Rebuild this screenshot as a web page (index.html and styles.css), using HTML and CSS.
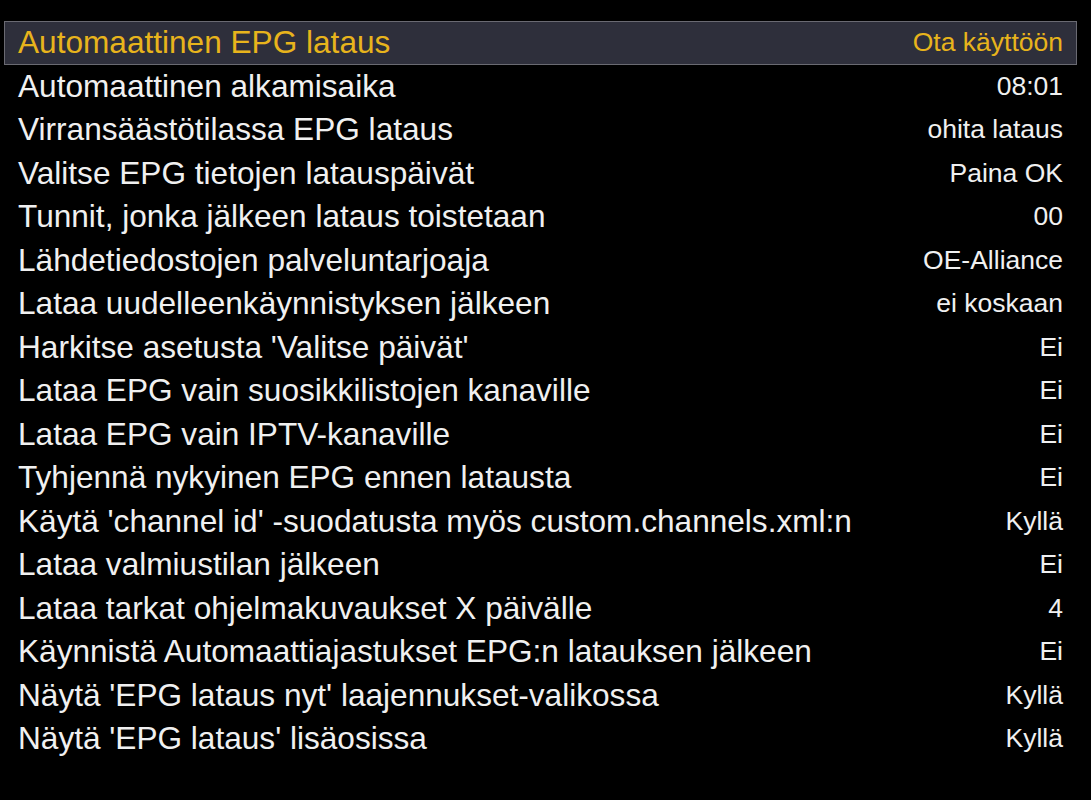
FILE: index.html
```html
<!DOCTYPE html>
<html lang="fi">
<head>
<meta charset="utf-8">
<link rel="stylesheet" href="styles.css">
</head>
<body>
<div class="list">
  <div class="row selected"><span class="label">Automaattinen EPG lataus</span><span class="value">Ota käyttöön</span></div>
  <div class="row"><span class="label">Automaattinen alkamisaika</span><span class="value">08:01</span></div>
  <div class="row"><span class="label">Virransäästötilassa EPG lataus</span><span class="value">ohita lataus</span></div>
  <div class="row"><span class="label">Valitse EPG tietojen latauspäivät</span><span class="value">Paina OK</span></div>
  <div class="row"><span class="label">Tunnit, jonka jälkeen lataus toistetaan</span><span class="value">00</span></div>
  <div class="row"><span class="label">Lähdetiedostojen palveluntarjoaja</span><span class="value">OE-Alliance</span></div>
  <div class="row"><span class="label">Lataa uudelleenkäynnistyksen jälkeen</span><span class="value">ei koskaan</span></div>
  <div class="row"><span class="label">Harkitse asetusta 'Valitse päivät'</span><span class="value">Ei</span></div>
  <div class="row"><span class="label">Lataa EPG vain suosikkilistojen kanaville</span><span class="value">Ei</span></div>
  <div class="row"><span class="label">Lataa EPG vain IPTV-kanaville</span><span class="value">Ei</span></div>
  <div class="row"><span class="label">Tyhjennä nykyinen EPG ennen latausta</span><span class="value">Ei</span></div>
  <div class="row"><span class="label">Käytä 'channel id' -suodatusta myös custom.channels.xml:n</span><span class="value">Kyllä</span></div>
  <div class="row"><span class="label">Lataa valmiustilan jälkeen</span><span class="value">Ei</span></div>
  <div class="row"><span class="label">Lataa tarkat ohjelmakuvaukset X päivälle</span><span class="value">4</span></div>
  <div class="row"><span class="label">Käynnistä Automaattiajastukset EPG:n latauksen jälkeen</span><span class="value">Ei</span></div>
  <div class="row"><span class="label">Näytä 'EPG lataus nyt' laajennukset-valikossa</span><span class="value">Kyllä</span></div>
  <div class="row"><span class="label">Näytä 'EPG lataus' lisäosissa</span><span class="value">Kyllä</span></div>
</div>
</body>
</html>
```
FILE: styles.css
```css
html, body {
  margin: 0;
  padding: 0;
  background: #000;
}
body {
  width: 1091px;
  height: 800px;
  overflow: hidden;
  font-family: "Liberation Sans", Arial, sans-serif;
  color: #f0f0f0;
}
.list {
  display: flex;
  flex-direction: column;
  padding: 21px 14px 0 4px;
}
.row {
  display: flex;
  align-items: center;
  justify-content: space-between;
  height: 43.5px;
  box-sizing: border-box;
  padding: 0 13px 0 13px;
  border: 1px solid transparent;
}
.row.selected {
  background: #2e2f3b;
  border-color: #6a6a72;
  color: #e8b41c;
}
.label {
  font-size: 31.6px;
  white-space: nowrap;
}
.value {
  font-size: 26.5px;
  white-space: nowrap;
}
```
